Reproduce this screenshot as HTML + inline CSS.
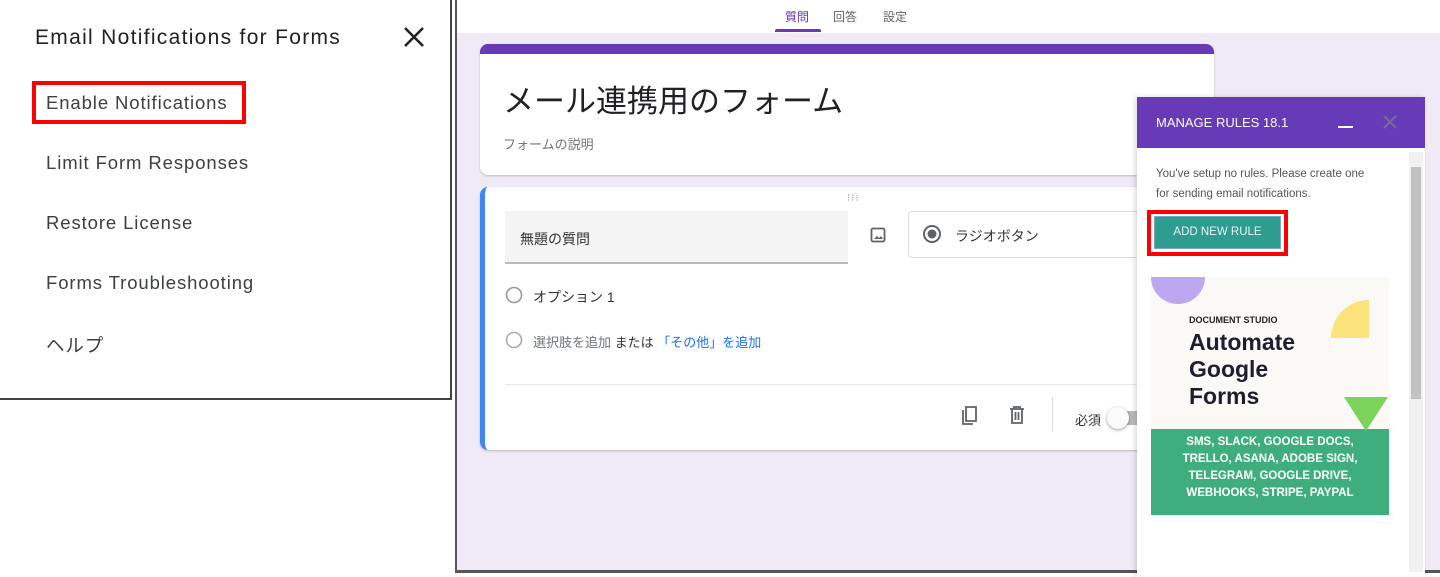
<!DOCTYPE html>
<html><head><meta charset="utf-8"><style>
*{box-sizing:border-box;margin:0;padding:0}
body{width:1440px;height:574px;overflow:hidden;background:#fff;position:relative;font-family:"Liberation Sans","Noto Sans CJK JP",sans-serif}
.abs{position:absolute}
#left{left:0;top:-2px;width:452px;height:402px;background:#fff;border-right:2px solid #444;border-bottom:2px solid #444}
#left .t{left:35px;top:28px;font-size:21px;color:#202124;letter-spacing:1.3px}
#left .it{left:46px;font-size:18.5px;color:#3c4043;letter-spacing:0.9px}
#main{left:455px;top:0;width:990px;height:573px;background:#efeaf6;border-left:2px solid #555;border-bottom:3px solid #555}
#topbar{left:0;top:0;width:990px;height:33px;background:#fff}
.card{background:#fff;border-radius:8px;box-shadow:0 1px 2px rgba(0,0,0,.2)}
</style></head><body>
<div id="left" class="abs">
  <div class="abs t">Email Notifications for Forms</div>
  <svg class="abs" style="left:403px;top:28px" width="22" height="22" viewBox="0 0 22 22"><path d="M2 2L20 20M20 2L2 20" stroke="#202124" stroke-width="2.6"/></svg>
  <div class="abs" style="left:32px;top:83px;width:214px;height:43px;border:4px solid #f00"></div>
  <div class="abs it" style="top:94px">Enable Notifications</div>
  <div class="abs it" style="top:154px">Limit Form Responses</div>
  <div class="abs it" style="top:214px">Restore License</div>
  <div class="abs it" style="top:274px">Forms Troubleshooting</div>
  <div class="abs it" style="top:334px">ヘルプ</div>
</div>
<div id="main" class="abs">
  <div id="topbar" class="abs">
    <div class="abs" style="left:328px;top:8px;font-size:12px;color:#673ab7">質問</div>
    <div class="abs" style="left:318px;top:29px;width:46px;height:3px;background:#673ab7;border-radius:2px 2px 0 0"></div>
    <div class="abs" style="left:376px;top:8px;font-size:12px;color:#5f6368">回答</div>
    <div class="abs" style="left:426px;top:8px;font-size:12px;color:#5f6368">設定</div>
  </div>
  <div class="abs card" style="left:23px;top:44px;width:734px;height:131px;overflow:hidden;border-top:10px solid #673ab7">
    <div class="abs" style="left:23px;top:22px;font-size:31px;color:#202124">メール連携用のフォーム</div>
    <div class="abs" style="left:23px;top:80px;font-size:13px;color:#70757a">フォームの説明</div>
  </div>
  <div class="abs card" style="left:23px;top:187px;width:734px;height:263px;overflow:hidden;border-left:5px solid #4285f4">
    <div class="abs" style="left:362px;top:6px;font-size:10px;color:#999;letter-spacing:1px">⁝⁝⁝</div>
    <div class="abs" style="left:20px;top:24px;width:343px;height:53px;background:#f4f4f4;border-bottom:2px solid #bbb"></div>
    <div class="abs" style="left:35px;top:42px;font-size:14px;color:#333">無題の質問</div>
    <svg class="abs" style="left:385px;top:40px" width="16" height="16" viewBox="0 0 16 16"><rect x="1.5" y="1.5" width="13" height="13" rx="1.5" fill="none" stroke="#5f6368" stroke-width="1.8"/><path d="M4 12l3-3 2 2 2-2 2 3z" fill="#5f6368"/></svg>
    <div class="abs" style="left:423px;top:24px;width:300px;height:47px;border:1px solid #dadce0;border-radius:4px"></div>
    <svg class="abs" style="left:437px;top:37px" width="20" height="20"><circle cx="10" cy="10" r="8" fill="none" stroke="#5f6368" stroke-width="2"/><circle cx="10" cy="10" r="4.5" fill="#5f6368"/></svg>
    <div class="abs" style="left:470px;top:39px;font-size:14px;color:#333">ラジオボタン</div>
    <svg class="abs" style="left:20px;top:99px" width="18" height="18"><circle cx="9" cy="9" r="7.5" fill="none" stroke="#999" stroke-width="1.6"/></svg>
    <div class="abs" style="left:48px;top:100px;font-size:14px;color:#333">オプション 1</div>
    <svg class="abs" style="left:20px;top:144px" width="18" height="18"><circle cx="9" cy="9" r="7.5" fill="none" stroke="#aaa" stroke-width="1.6"/></svg>
    <div class="abs" style="left:48px;top:145px;font-size:13px;color:#70757a">選択肢を追加 <span style="color:#333">または</span> <span style="color:#1a73e8">「その他」を追加</span></div>
    <div class="abs" style="left:20px;top:197px;width:720px;height:1px;background:#e8e8e8"></div>
    <svg class="abs" style="left:475px;top:217px" width="20" height="22" viewBox="0 0 20 22"><path d="M6 3h10v14H6z M3 6v14h10" fill="none" stroke="#5f6368" stroke-width="1.8"/></svg>
    <svg class="abs" style="left:523px;top:218px" width="18" height="20" viewBox="0 0 18 20"><path d="M2 4h14M6 4V2h6v2M4 4v14h10V4M7.5 7v8M10.5 7v8" fill="none" stroke="#5f6368" stroke-width="1.8"/></svg>
    <div class="abs" style="left:567px;top:210px;width:1px;height:34px;background:#dadce0"></div>
    <div class="abs" style="left:590px;top:223px;font-size:13px;color:#333">必須</div>
    <div class="abs" style="left:625px;top:224px;width:40px;height:14px;border-radius:7px;background:#bbb"></div>
    <div class="abs" style="left:622px;top:220px;width:22px;height:22px;border-radius:50%;background:#fafafa;box-shadow:0 1px 3px rgba(0,0,0,.4)"></div>
  </div>
  <div class="abs" style="left:680px;top:97px;width:288px;height:480px;background:#fff;box-shadow:-2px 0 5px rgba(0,0,0,.15)">
    <div class="abs" style="left:0;top:0;width:288px;height:51px;background:#673ab7"></div>
    <div class="abs" style="left:19px;top:18px;font-size:13px;color:#fff">MANAGE RULES 18.1</div>
    <div class="abs" style="left:201px;top:29px;width:15px;height:2px;background:#fff"></div>
    <svg class="abs" style="left:246px;top:18px" width="14" height="14"><path d="M1 1L13 13M13 1L1 13" stroke="#7a6a9a" stroke-width="2"/></svg>
    <div class="abs" style="left:19px;top:67px;font-size:11.5px;line-height:20px;color:#555;width:215px">You've setup no rules. Please create one for sending email notifications.</div>
    <div class="abs" style="left:10px;top:113px;width:141px;height:46px;border:4px solid #f00"></div>
    <div class="abs" style="left:17px;top:119px;width:127px;height:33px;background:#2e9d8f;border:1px solid #7ac;color:#e8f6f3;font-size:11.5px;text-align:center;line-height:31px">ADD NEW RULE</div>
    <div class="abs" style="left:14px;top:180px;width:238px;height:240px;background:#faf9f5;overflow:hidden">
      <div class="abs" style="left:0;top:-27px;width:54px;height:54px;border-radius:50%;background:#bda7f0"></div>
      <div class="abs" style="left:180px;top:23px;width:38px;height:38px;border-radius:38px 0 0 0;background:#fbe27b"></div>
      <div class="abs" style="left:38px;top:38px;font-size:9px;font-weight:bold;color:#222">DOCUMENT STUDIO</div>
      <div class="abs" style="left:38px;top:52px;font-size:23px;font-weight:bold;color:#1e1e2e;line-height:27px">Automate<br>Google<br>Forms</div>
      <div class="abs" style="left:0;top:152px;width:238px;height:86px;background:#3fae7d"></div>
      <div class="abs" style="left:193px;top:120px;width:0;height:0;border-left:22px solid transparent;border-right:22px solid transparent;border-top:34px solid #7bd35b"></div>
      <div class="abs" style="left:0;top:157px;width:238px;text-align:center;font-size:11.5px;font-weight:bold;color:#fff;line-height:17px">SMS, SLACK, GOOGLE DOCS,<br>TRELLO, ASANA, ADOBE SIGN,<br>TELEGRAM, GOOGLE DRIVE,<br>WEBHOOKS, STRIPE, PAYPAL</div>
    </div>
    <div class="abs" style="left:272px;top:55px;width:14px;height:420px;background:#f1f1f1"></div>
    <div class="abs" style="left:274px;top:70px;width:10px;height:232px;background:#c1c1c1"></div>
  </div>
</div>
</body></html>
